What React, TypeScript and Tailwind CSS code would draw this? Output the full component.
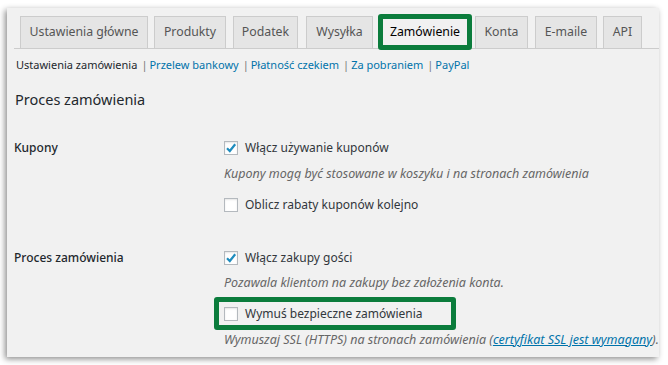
import React from 'react'

const font = { fontFamily: '"Noto Sans", "Open Sans", Arial, sans-serif' }

const tabs = [
  { label: 'Ustawienia główne', w: 'w-[128px]', ml: 'ml-[6px]' },
  { label: 'Produkty', w: 'w-[72px]', ml: 'ml-[6px]' },
  { label: 'Podatek', w: 'w-[65px]', ml: 'ml-[7px]' },
  { label: 'Wysyłka', w: 'w-[67px]', ml: 'ml-[8px]' },
  { label: 'Zamówienie', w: 'w-[90px]', ml: 'ml-[7px]', active: true },
  { label: 'Konta', w: 'w-[53px]', ml: 'ml-[5px]' },
  { label: 'E-maile', w: 'w-[62px]', ml: 'ml-[7px]' },
  { label: 'API', w: 'w-[39px]', ml: 'ml-[6px]' },
]

const Checkbox: React.FC<{ checked?: boolean }> = ({ checked }) => (
  <span className="w-[14px] h-[14px] border border-[#b4b9be] bg-white shadow-[inset_0_1px_2px_rgba(0,0,0,0.1)] flex items-center justify-center shrink-0">
    {checked && (
      <svg width="12" height="12" viewBox="0 0 12 12">
        <path d="M2 6.2 L4.8 9 L10.2 2.2" fill="none" stroke="#1e8cbe" strokeWidth="2.2" />
      </svg>
    )}
  </span>
)

const Option: React.FC<{ checked?: boolean; label: string; mt: string; children?: React.ReactNode }> = ({ checked, label, mt, children }) => (
  <div className={`relative h-[20px] flex items-center gap-[7px] ${mt}`}>
    <Checkbox checked={checked} />
    <span className="text-[12px] text-[#32373c]">{label}</span>
    {children}
  </div>
)

const Desc: React.FC<{ mt: string; children: React.ReactNode }> = ({ mt, children }) => (
  <div className={`h-[20px] flex items-center text-[12.5px] italic text-[#666] ${mt}`}>{children}</div>
)

const Sep = () => <span className="text-[#777] ml-[4px] mr-[2px]">|</span>

export default function App() {
  return (
    <div className="w-[668px] h-[365px] bg-white pt-[8px] pl-[7px]" style={font}>
      <div className="w-[652px] h-[349px] bg-[#f1f1f1] shadow-[-2px_2px_6px_rgba(0,0,0,0.45)] pl-[7px] flex flex-col">
        <div className="pt-[8px] border-b border-[#ccc] flex">
          {tabs.map((t) => (
            <div
              key={t.label}
              className={`relative h-[33px] -mb-px ${t.w} ${t.ml} flex items-center justify-center text-[12.3px] border border-[#ccc] ${
                t.active ? 'bg-[#f1f1f1] border-b-[#f1f1f1] text-black' : 'bg-[#e5e5e5] text-[#555]'
              }`}
            >
              {t.label}
              {t.active && (
                <div className="absolute -left-[3px] -top-[3px] -right-[3px] -bottom-[2px] border-[5px] border-[#0b7c3c] rounded-[3px]" />
              )}
            </div>
          ))}
        </div>

        <div className="mt-[6px] h-[20px] flex items-center text-[11px] pl-[2px]">
          <span className="text-[#23282d]">Ustawienia zamówienia</span>
          <Sep />
          <span className="text-[#0073aa]">Przelew bankowy</span>
          <Sep />
          <span className="text-[#0073aa]">Płatność czekiem</span>
          <Sep />
          <span className="text-[#0073aa]">Za pobraniem</span>
          <Sep />
          <span className="text-[#0073aa]">PayPal</span>
        </div>

        <h2 className="mt-[13px] h-[24px] flex items-center text-[14.5px] text-[#23282d] pl-[1px]">Proces zamówienia</h2>

        <div className="mt-[26px] grid grid-cols-[210px_1fr]">
          <div className="h-[20px] flex items-center text-[12px] font-medium text-[#23282d]">Kupony</div>
          <div>
            <Option checked label="Włącz używanie kuponów" mt="" />
            <Desc mt="mt-[6px]">Kupony mogą być stosowane w koszyku i na stronach zamówienia</Desc>
            <Option label="Oblicz rabaty kuponów kolejno" mt="mt-[11px]" />
          </div>
        </div>

        <div className="mt-[33px] grid grid-cols-[210px_1fr]">
          <div className="h-[20px] flex items-center text-[12px] font-medium text-[#23282d]">Proces zamówienia</div>
          <div>
            <Option checked label="Włącz zakupy gości" mt="" />
            <Desc mt="mt-[5px]">Pozawala klientom na zakupy bez założenia konta.</Desc>
            <Option label="Wymuś bezpieczne zamówienia" mt="mt-[11px]">
              <div className="absolute -left-[10px] -top-[7px] w-[242px] h-[33px] border-[5px] border-[#0b7c3c] rounded-[3px]" />
            </Option>
            <Desc mt="mt-[6px]">
              Wymuszaj SSL (HTTPS) na stronach zamówienia (
              <span className="text-[#0073aa] underline">certyfikat SSL jest wymagany</span>).
            </Desc>
          </div>
        </div>
      </div>
    </div>
  )
}
